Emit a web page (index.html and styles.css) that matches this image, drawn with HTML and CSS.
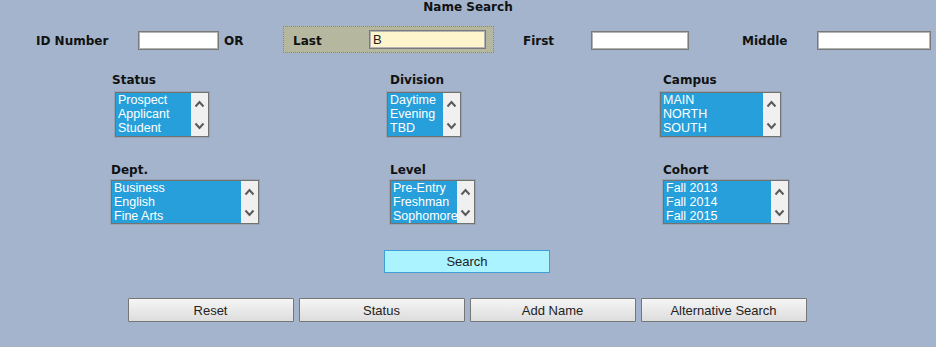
FILE: index.html
```html
<!DOCTYPE html>
<html lang="en">
<head>
<meta charset="utf-8">
<title>Name Search</title>
<link rel="stylesheet" href="styles.css">
</head>
<body>
<div class="page">
  <h1 class="title">Name Search</h1>

  <div class="name-row">
    <label class="lbl id-lbl">ID Number</label>
    <input class="txt id-input" type="text">
    <span class="lbl or-lbl">OR</span>
    <div class="last-box">
      <label class="lbl last-lbl">Last</label>
      <input class="txt last-input" type="text" value="B">
    </div>
    <label class="lbl first-lbl">First</label>
    <input class="txt first-input" type="text">
    <label class="lbl middle-lbl">Middle</label>
    <input class="txt middle-input" type="text">
  </div>

  <div class="filters">
    <div class="field row-a">
      <div class="lbl flabel off-1">Status</div>
      <div class="listbox lb-status off-4">
        <div class="opts"><div>Prospect</div><div>Applicant</div><div>Student</div></div>
        <div class="sbar">
          <svg viewBox="0 0 11 8" width="11" height="8"><path d="M1.5 6.5 L5.5 2 L9.5 6.5"/></svg>
          <svg viewBox="0 0 11 8" width="11" height="8"><path d="M1.5 1.5 L5.5 6 L9.5 1.5"/></svg>
        </div>
      </div>
    </div>
    <div class="field row-a">
      <div class="lbl flabel off-3">Division</div>
      <div class="listbox lb-division">
        <div class="opts"><div>Daytime</div><div>Evening</div><div>TBD</div></div>
        <div class="sbar">
          <svg viewBox="0 0 11 8" width="11" height="8"><path d="M1.5 6.5 L5.5 2 L9.5 6.5"/></svg>
          <svg viewBox="0 0 11 8" width="11" height="8"><path d="M1.5 1.5 L5.5 6 L9.5 1.5"/></svg>
        </div>
      </div>
    </div>
    <div class="field row-a">
      <div class="lbl flabel off-3">Campus</div>
      <div class="listbox lb-campus">
        <div class="opts"><div>MAIN</div><div>NORTH</div><div>SOUTH</div></div>
        <div class="sbar">
          <svg viewBox="0 0 11 8" width="11" height="8"><path d="M1.5 6.5 L5.5 2 L9.5 6.5"/></svg>
          <svg viewBox="0 0 11 8" width="11" height="8"><path d="M1.5 1.5 L5.5 6 L9.5 1.5"/></svg>
        </div>
      </div>
    </div>

    <div class="field row-b">
      <div class="lbl flabel">Dept.</div>
      <div class="listbox lb-dept">
        <div class="opts"><div>Business</div><div>English</div><div>Fine Arts</div></div>
        <div class="sbar">
          <svg viewBox="0 0 11 8" width="11" height="8"><path d="M1.5 6.5 L5.5 2 L9.5 6.5"/></svg>
          <svg viewBox="0 0 11 8" width="11" height="8"><path d="M1.5 1.5 L5.5 6 L9.5 1.5"/></svg>
        </div>
      </div>
    </div>
    <div class="field row-b">
      <div class="lbl flabel off-3">Level</div>
      <div class="listbox lb-level off-3">
        <div class="opts"><div>Pre-Entry</div><div>Freshman</div><div>Sophomore</div></div>
        <div class="sbar">
          <svg viewBox="0 0 11 8" width="11" height="8"><path d="M1.5 6.5 L5.5 2 L9.5 6.5"/></svg>
          <svg viewBox="0 0 11 8" width="11" height="8"><path d="M1.5 1.5 L5.5 6 L9.5 1.5"/></svg>
        </div>
      </div>
    </div>
    <div class="field row-b">
      <div class="lbl flabel off-3">Cohort</div>
      <div class="listbox lb-cohort off-3">
        <div class="opts"><div>Fall 2013</div><div>Fall 2014</div><div>Fall 2015</div></div>
        <div class="sbar">
          <svg viewBox="0 0 11 8" width="11" height="8"><path d="M1.5 6.5 L5.5 2 L9.5 6.5"/></svg>
          <svg viewBox="0 0 11 8" width="11" height="8"><path d="M1.5 1.5 L5.5 6 L9.5 1.5"/></svg>
        </div>
      </div>
    </div>
  </div>

  <div class="search-wrap">
    <button class="search-btn" type="button">Search</button>
  </div>

  <div class="actions">
    <button class="act-btn" type="button">Reset</button>
    <button class="act-btn" type="button">Status</button>
    <button class="act-btn" type="button">Add Name</button>
    <button class="act-btn" type="button">Alternative Search</button>
  </div>
</div>
</body>
</html>
```

FILE: styles.css
```css
html, body {
  margin: 0;
  padding: 0;
  background: #a3b4cc;
}

.page {
  width: 936px;
  height: 347px;
  font-family: "DejaVu Sans", Verdana, sans-serif;
  color: #111;
}

.title {
  margin: 0;
  font-size: 12px;
  line-height: 14px;
  font-weight: bold;
  text-align: center;
}

.lbl {
  font-family: "DejaVu Sans", Verdana, sans-serif;
  font-weight: bold;
  font-size: 12px;
  line-height: 14px;
  color: #111;
}

/* ---------- name row ---------- */
.name-row {
  display: flex;
  align-items: center;
  height: 27px;
  margin-top: 12px;
  padding-left: 36px;
}
.name-row > .lbl {
  padding-top: 2px;
}

.txt {
  box-sizing: border-box;
  height: 19px;
  margin: 1px 0 0;
  padding: 0 3px;
  border: 1px solid #7a7a7a;
  box-shadow: inset 0 0 0 1px #b4b4b4;
  background: #fff;
  font-family: "Liberation Sans", Arial, sans-serif;
  font-size: 13px;
  color: #222;
  outline: none;
}

.id-lbl { width: 102px; }
.id-input { width: 81px; }
.or-lbl { width: 59px; margin-left: 5px; }

.last-box {
  box-sizing: border-box;
  display: flex;
  align-items: center;
  width: 211px;
  height: 27px;
  padding-left: 9px;
  border: 1px dotted #858873;
  background: #b5b89e;
}
.last-box .lbl { padding-top: 2px; }
.last-lbl { width: 76px; }
.last-input {
  width: 117px;
  margin-top: 0;
  background: #fff5cc;
}

.first-lbl { width: 68px; margin-left: 29px; }
.first-input { width: 98px; }
.middle-lbl { width: 75px; margin-left: 53px; }
.middle-input { width: 114px; }

/* ---------- filter lists ---------- */
.filters {
  display: grid;
  grid-template-columns: 276px 273px 1fr;
  row-gap: 26px;
  margin-top: 20px;
  padding-left: 111px;
}

.field {
  display: flex;
  flex-direction: column;
  align-items: flex-start;
}
.row-a .flabel { margin-bottom: 5px; }
.row-b .flabel { margin-bottom: 3px; }

.off-1 { margin-left: 1px; }
.off-3 { margin-left: 3px; }
.off-4 { margin-left: 4px; }

.listbox {
  box-sizing: border-box;
  display: flex;
  height: 45px;
  border: 1px solid #727272;
  box-shadow: 0 0 0 1px #9aa3b1;
  background: #279fdb;
}
.row-b .listbox { height: 44px; }

.opts {
  flex: 1;
  min-width: 0;
  padding-left: 2px;
  font-family: "Liberation Sans", Arial, sans-serif;
  font-size: 12.5px;
  line-height: 14px;
  color: #fff;
  white-space: nowrap;
}

.sbar {
  flex: 0 0 17px;
  width: 17px;
  display: flex;
  flex-direction: column;
  justify-content: space-between;
  align-items: center;
  padding: 7px 0 6px;
  box-sizing: border-box;
  background: #f0f0f0;
  position: relative;
  z-index: 1;
}
.sbar svg path {
  fill: none;
  stroke: #5a5a5a;
  stroke-width: 2;
}

.lb-status { width: 94px; }
.lb-division { width: 74px; }
.lb-campus { width: 121px; }
.lb-dept { width: 148px; }
.lb-level { width: 85px; }
.lb-cohort { width: 126px; }

/* ---------- buttons ---------- */
.search-wrap {
  display: flex;
  justify-content: center;
  margin-top: 26px;
  padding-right: 2px;
}

.search-btn,
.act-btn {
  box-sizing: border-box;
  width: 166px;
  height: 23px;
  margin: 0;
  padding: 0;
  font-family: "Liberation Sans", Arial, sans-serif;
  font-size: 13px;
  color: #222;
  cursor: pointer;
}

.search-btn {
  background: #aaf3ff;
  border: 1px solid #3e9fd6;
}

.actions {
  display: flex;
  justify-content: center;
  gap: 5px;
  margin-top: 25px;
  padding-right: 2px;
}

.act-btn {
  height: 24px;
  background: linear-gradient(#f5f5f5, #dddddd);
  border: 1px solid #767676;
  border-radius: 1px;
}
```
